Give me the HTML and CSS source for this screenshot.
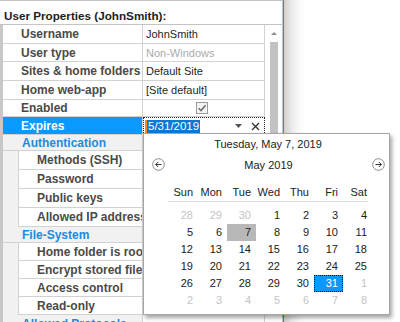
FILE: index.html
```html
<!DOCTYPE html>
<html>
<head>
<meta charset="utf-8">
<link rel="stylesheet" href="styles.css">
</head>
<body>
<div class="screen">
  <div class="panel">
    <div class="title">User Properties (JohnSmith):</div>
    <div class="body">
      <div class="grid">
        <div class="row"><div class="name">Username</div><div class="val">JohnSmith</div></div>
        <div class="row s"><div class="name">User type</div><div class="val dim">Non-Windows</div></div>
        <div class="row"><div class="name">Sites &amp; home folders</div><div class="val">Default Site</div></div>
        <div class="row"><div class="name">Home web-app</div><div class="val">[Site default]</div></div>
        <div class="row e"><div class="name">Enabled</div><div class="val center">
          <svg width="12" height="12" viewBox="0 0 12 12"><rect x="0.5" y="0.5" width="11" height="11" fill="#f4f4f4" stroke="#9c9c9c"/><path d="M2.6 6.2 L5 8.6 L9.6 3.2" fill="none" stroke="#707070" stroke-width="1.6"/></svg>
        </div></div>
        <div class="row s sel"><div class="name">Expires</div><div class="val editor">
          <span class="caret"></span><span class="seltext">5/31/2019</span>
          <svg class="dd" width="7" height="4" viewBox="0 0 7 4"><polygon points="0,0 7,0 3.5,4" fill="#555"/></svg>
          <svg class="clr" width="9" height="9" viewBox="0 0 9 9"><path d="M1 1 L8 8 M8 1 L1 8" stroke="#333" stroke-width="1.3"/></svg>
        </div></div>
        <div class="row c cat"><div class="name">Authentication</div><div class="val"></div></div>
        <div class="row child"><div class="indent"></div><div class="name">Methods (SSH)</div><div class="val"></div></div>
        <div class="row child"><div class="indent"></div><div class="name">Password</div><div class="val"></div></div>
        <div class="row child"><div class="indent"></div><div class="name">Public keys</div><div class="val"></div></div>
        <div class="row child"><div class="indent"></div><div class="name">Allowed IP addresses</div><div class="val"></div></div>
        <div class="row c cat"><div class="name">File-System</div><div class="val"></div></div>
        <div class="row s child"><div class="indent"></div><div class="name">Home folder is root</div><div class="val"></div></div>
        <div class="row s child"><div class="indent"></div><div class="name">Encrypt stored files</div><div class="val"></div></div>
        <div class="row s child"><div class="indent"></div><div class="name">Access control</div><div class="val"></div></div>
        <div class="row s child"><div class="indent"></div><div class="name">Read-only</div><div class="val"></div></div>
        <div class="row cat"><div class="name">Allowed Protocols</div><div class="val"><span class="tick"></span></div></div>
      </div>
      <div class="scroll"><div class="up"></div><div class="thumb"></div></div>
    </div>
  </div>
  <div class="edge"></div>
  <div class="shade"></div>

  <div class="cal">
    <div class="cal-title">Tuesday, May 7, 2019</div>
    <div class="cal-nav">
      <svg width="13" height="13" viewBox="0 0 13 13"><circle cx="6.5" cy="6.5" r="5.8" fill="none" stroke="#8a8a8a"/><path d="M9.5 6.5 H3.8 M6.2 4 L3.7 6.5 L6.2 9" fill="none" stroke="#333" stroke-width="1"/></svg>
      <span>May 2019</span>
      <svg width="13" height="13" viewBox="0 0 13 13"><circle cx="6.5" cy="6.5" r="5.8" fill="none" stroke="#8a8a8a"/><path d="M3.5 6.5 H9.2 M6.8 4 L9.3 6.5 L6.8 9" fill="none" stroke="#333" stroke-width="1"/></svg>
    </div>
    <div class="cal-head">
      <span>Sun</span><span>Mon</span><span>Tue</span><span>Wed</span><span>Thu</span><span>Fri</span><span>Sat</span>
    </div>
    <div class="cal-sep"></div>
    <div class="cal-days">
      <span class="o">28</span><span class="o">29</span><span class="o">30</span><span>1</span><span>2</span><span>3</span><span>4</span>
      <span>5</span><span>6</span><span class="today">7</span><span>8</span><span>9</span><span>10</span><span>11</span>
      <span>12</span><span>13</span><span>14</span><span>15</span><span>16</span><span>17</span><span>18</span>
      <span>19</span><span>20</span><span>21</span><span>22</span><span>23</span><span>24</span><span>25</span>
      <span>26</span><span>27</span><span>28</span><span>29</span><span>30</span><span class="pick">31</span><span class="o">1</span>
      <span class="o">2</span><span class="o">3</span><span class="o">4</span><span class="o">5</span><span class="o">6</span><span class="o">7</span><span class="o">8</span>
    </div>
  </div>
</div>
</body>
</html>
```

FILE: styles.css
```css
html, body {
  margin: 0;
  padding: 0;
  background: #fff;
}
body {
  width: 400px;
  height: 322px;
  overflow: hidden;
  font-family: "Liberation Sans", Arial, sans-serif;
}
.screen {
  position: relative;
  display: flex;
  height: 322px;
  overflow: hidden;
}
.panel {
  flex: none;
  width: 283px;
  box-sizing: border-box;
  border-right: 1px solid #c4c4c4;
  display: flex;
  flex-direction: column;
}
.edge {
  flex: none;
  width: 1px;
  background: #3a86d8;
}
.shade {
  flex: 1;
  background: linear-gradient(to right, #cfcfcf 0, #ececec 8px, #fbfbfb 16px, #fff 22px);
}
.title {
  flex: none;
  padding: 6px 0 0 4px;
  box-sizing: border-box;
  height: 25px;
  border-top: 1px solid #c4c4c4;
  border-bottom: 1px solid #c4c4c4;
  font-weight: bold;
  font-size: 11.7px;
  line-height: 17px;
  color: #1e1e1e;
  white-space: nowrap;
}
.body {
  flex: 1;
  display: flex;
  border-left: 3px solid #c8c8c8;
  overflow: hidden;
}
.grid {
  flex: none;
  width: 262px;
  display: flex;
  flex-direction: column;
}
.row {
  flex: none;
  display: flex;
  height: 19px;
}
.row.s { height: 18px; }
.row.e { height: 17px; }
.row.c { height: 16px; }
.name {
  flex: none;
  width: 140px;
  box-sizing: border-box;
  padding-left: 18px;
  border-right: 1px solid #d2d2d2;
  border-bottom: 1px solid #d2d2d2;
  display: flex;
  align-items: center;
  font-weight: bold;
  font-size: 12px;
  color: #4a4a4a;
  white-space: nowrap;
  overflow: hidden;
}
.val {
  flex: none;
  width: 122px;
  box-sizing: border-box;
  padding-left: 3px;
  border-right: 1px solid #d2d2d2;
  border-bottom: 1px solid #d2d2d2;
  display: flex;
  align-items: center;
  font-size: 11px;
  color: #1e1e1e;
  white-space: nowrap;
  overflow: hidden;
}
.val.dim { color: #ababab; }
.val.center {
  justify-content: center;
  padding-left: 0;
  padding-right: 3px;
}
.child .indent {
  flex: none;
  width: 16px;
  box-sizing: border-box;
  background: #f1f1f1;
  border-right: 1px solid #d2d2d2;
}
.child .name { width: 124px; }
.cat .name {
  background: #f1f1f1;
  color: #1b8be0;
  padding-left: 19px;
}
.sel .name {
  background: #0a99ff;
  color: #fff;
}
.val.editor {
  border: 1px dotted #222;
  padding-left: 1px;
  padding-right: 4px;
}
.caret {
  width: 2px;
  height: 13px;
  background: #ff8a1e;
}
.seltext {
  background: #0a78d4;
  color: #fff;
  font-size: 11.5px;
  line-height: 13px;
  padding: 0 1px;
}
.dd { margin-left: auto; margin-right: 9px; }
.clr { margin-right: 0; }
.tick {
  margin-left: auto;
  margin-right: 6px;
  margin-top: 6px;
  width: 0;
  height: 0;
  border-left: 2px solid transparent;
  border-right: 2px solid transparent;
  border-bottom: 2px solid #555;
}
.scroll {
  flex: none;
  width: 17px;
  display: flex;
  flex-direction: column;
  align-items: center;
}
.up {
  margin-top: 7px;
  width: 0;
  height: 0;
  border-left: 3px solid transparent;
  border-right: 3px solid transparent;
  border-bottom: 3px solid #8e8e8e;
}
.thumb {
  margin-top: 7px;
  width: 8px;
  height: 250px;
  background: #c2c2c2;
}

/* calendar popup */
.cal {
  position: absolute;
  left: 143px;
  top: 133px;
  width: 245px;
  height: 180px;
  border: 1px solid #a6a6a6;
  background: #fff;
  box-shadow: 2px 3px 4px rgba(0, 0, 0, 0.35);
  font-size: 11px;
  color: #222;
}
.cal-title {
  height: 20px;
  line-height: 20px;
  text-align: center;
  padding-left: 3px;
}
.cal-nav {
  height: 21px;
  display: flex;
  align-items: center;
  justify-content: space-between;
  padding: 0 4px 0 8px;
}
.cal-nav span {
  line-height: 14px;
}
.cal-head, .cal-days {
  display: grid;
  grid-template-columns: repeat(7, 29px);
  margin-left: 25px;
}
.cal-head {
  margin-top: 9px;
  height: 17px;
  line-height: 17px;
}
.cal-head span, .cal-days span {
  text-align: right;
  padding-right: 5px;
}
.cal-sep {
  margin-left: 24px;
  width: 200px;
  height: 1px;
  background: #dcdcdc;
}
.cal-days {
  margin-top: 5px;
  grid-auto-rows: 17px;
  line-height: 17px;
}
.cal-days .o { color: #c4c4c4; }
.cal-days .today { background: #b8b8b8; }
.cal-days .pick {
  background: #0a99ff;
  color: #fff;
  outline: 1px dotted #111;
  outline-offset: -1px;
}
```
